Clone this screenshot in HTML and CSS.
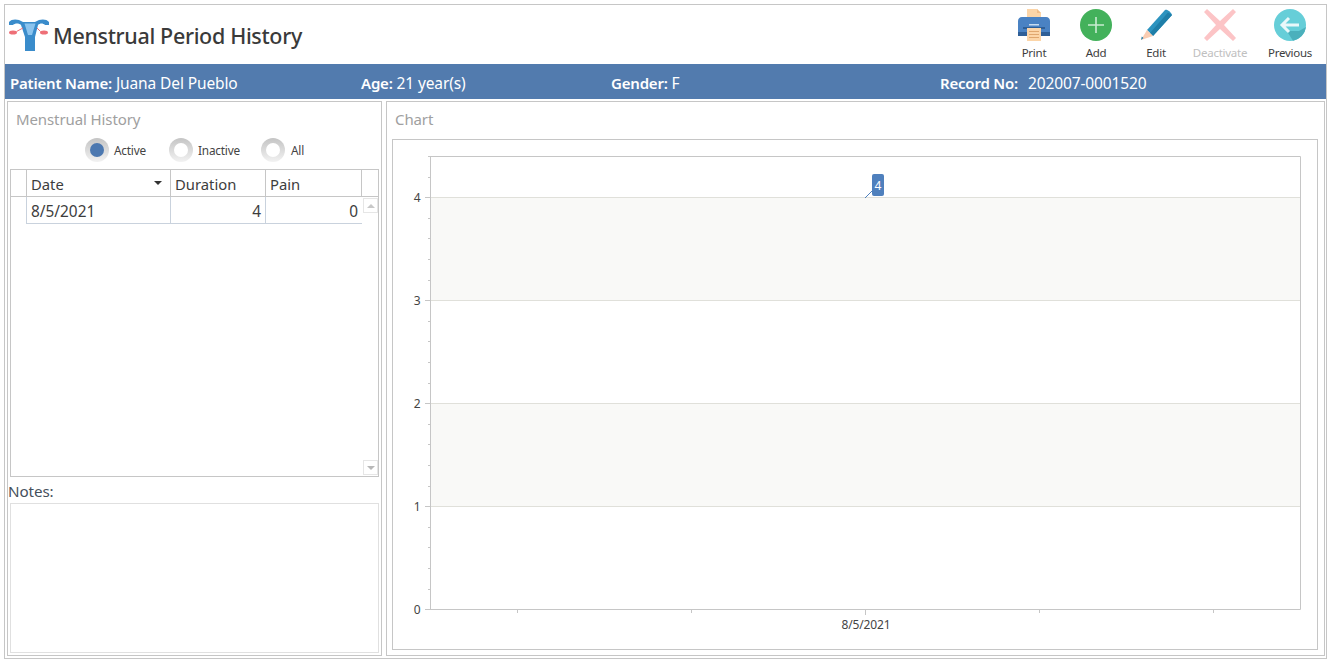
FILE: index.html
```html
<!DOCTYPE html>
<html lang="en">
<head>
<meta charset="utf-8">
<title>Menstrual Period History</title>
<link rel="stylesheet" href="styles.css">
</head>
<body>
<div class="app">
  <header class="top">
    <div class="brand">
      <svg class="logo" viewBox="0 0 42 34" width="42" height="34">
        <path d="M1 7 V4 C3 1 8 1 11 2 L15 4 H27 L31 2 C34 1 39 1 41 4 V7 H37 C35 5 32 5 30 7 L27 19 V33 H17 V19 L13 7 C11 5 7 5 5 7 Z" fill="#3a8ccb"/>
        <path d="M16.500 5.500 H27.500 L24 17 H20 Z" fill="#8cc4ee"/>
        <ellipse cx="5" cy="14.500" rx="4" ry="2" fill="#ee6f77"/>
        <ellipse cx="36" cy="14.500" rx="4" ry="2" fill="#ee6f77"/>
        <path d="M8.500 13.500 L15 10 M32.500 13.500 L29 10" stroke="#ee6f77" stroke-width="1" fill="none"/>
      </svg>
      <h1 class="title">Menstrual Period History</h1>
    </div>
    <nav class="tools">
      <div class="tool tool-print">
        <svg viewBox="0 0 34 32" width="34" height="32">
          <path d="M10 0 H20 L24 4 V12 H10 Z" fill="#fcd5a8"/>
          <path d="M20 0 L24 4 H20 Z" fill="#f2bd88"/>
          <path d="M5 8 H29 C31.500 8 33 10 33 12 V27 H1 V12 C1 10 2.500 8 5 8 Z" fill="#4a82c3"/>
          <rect x="1" y="23" width="32" height="4" fill="#2f5f97"/>
          <rect x="6" y="18" width="22" height="2" fill="#2f5f97"/>
          <rect x="12" y="15" width="10" height="1.500" fill="#c7dcf1"/>
          <rect x="10" y="19" width="14" height="13" fill="#fcd5a8"/>
          <path d="M12 22.500 H22 M12 25.500 H22 M12 28.500 H22" stroke="#e0a76f" stroke-width="1"/>
        </svg>
        <span class="tool-label">Print</span>
      </div>
      <div class="tool tool-add">
        <svg viewBox="0 0 32 32" width="32" height="32">
          <circle cx="16" cy="16" r="16" fill="#43b15b"/>
          <path d="M16 8 V24 M8 16 H24" stroke="#c9ecd1" stroke-width="1.600"/>
        </svg>
        <span class="tool-label">Add</span>
      </div>
      <div class="tool tool-edit">
        <svg viewBox="0 0 32 32" width="32" height="32">
          <path d="M7 21 L25 1 C27 0 31 3 32 6 L13 27 Z" fill="#2c93bf"/>
          <path d="M10 24 L28 3.500 L32 6 L13 27 Z" fill="#1f7ea8"/>
          <path d="M7 21 L13 27 L1 31 Z" fill="#f9cdb3"/>
          <path d="M3.500 29 L1 31 L1.800 27.500 Z" fill="#1f7ea8"/>
        </svg>
        <span class="tool-label">Edit</span>
      </div>
      <div class="tool tool-off">
        <svg viewBox="0 0 32 32" width="32" height="32">
          <path d="M3 0 L16 12 L29 0 L32 3 L20 16 L32 29 L29 32 L16 20 L3 32 L0 29 L12 16 L0 3 Z" fill="#fcc4c6"/>
        </svg>
        <span class="tool-label tool-label-off">Deactivate</span>
      </div>
      <div class="tool tool-prev">
        <svg viewBox="0 0 32 32" width="32" height="32">
          <circle cx="16" cy="16" r="16" fill="#66ced8"/>
          <path d="M9 16 L15 22 L25 22 L32 18 A16 16 0 0 1 19 31.700 Z" fill="#4bb0bc"/>
          <path d="M15 9 L8 16 L15 23 M8 16 H25" stroke="#e9f8fa" stroke-width="3" fill="none"/>
        </svg>
        <span class="tool-label">Previous</span>
      </div>
    </nav>
  </header>

  <div class="patient">
    <div><b>Patient Name:</b> Juana Del Pueblo</div>
    <div><b>Age:</b> 21 year(s)</div>
    <div><b>Gender:</b> F</div>
    <div class="record"><b>Record No:</b><span>202007-0001520</span></div>
  </div>

  <main class="panels">
    <section class="panel left">
      <h2 class="panel-title">Menstrual History</h2>
      <div class="radios">
        <label class="radio radio-active"><i class="ring"><i class="dot"></i></i>Active</label>
        <label class="radio radio-inactive"><i class="ring"><i class="dot"></i></i>Inactive</label>
        <label class="radio radio-all"><i class="ring"><i class="dot"></i></i>All</label>
      </div>
      <div class="grid">
        <div class="grid-head">
          <div class="cell cell-ind"></div>
          <div class="cell cell-date">Date<i class="sort"></i></div>
          <div class="cell cell-dur">Duration</div>
          <div class="cell cell-pain">Pain</div>
          <div class="cell cell-end"></div>
        </div>
        <div class="grid-body">
          <div class="grid-rows">
            <div class="grid-row">
              <div class="cell cell-ind blank"></div>
              <div class="cell cell-date">8/5/2021</div>
              <div class="cell cell-dur num">4</div>
              <div class="cell cell-pain num last">0</div>
            </div>
          </div>
          <div class="scroll">
            <div class="scroll-btn"><i class="arrow-up"></i></div>
            <div class="scroll-btn"><i class="arrow-down"></i></div>
          </div>
        </div>
      </div>
      <div class="notes-label">Notes:</div>
      <div class="notes"></div>
    </section>

    <section class="panel right">
      <h2 class="panel-title">Chart</h2>
      <div class="chart">
        <svg class="chart-svg" viewBox="0 0 924 509" width="924" height="509">
          <g transform="translate(-393 -140)">
            <rect x="430" y="197" width="870" height="103" fill="#f9f9f7"/>
            <rect x="430" y="403" width="870" height="103" fill="#f9f9f7"/>
            <path d="M430 156.500 H1300.500 V609.500 M430 609.500 H1300.500" class="axis"/>
            <path d="M430 197.500 H1300 M430 300.500 H1300 M430 403.500 H1300 M430 506.500 H1300" class="gridline"/>
            <path d="M430.500 156 V610" class="axis"/>
            <path d="M425 197.500 H430 M425 300.500 H430 M425 403.500 H430 M425 506.500 H430 M425 609.500 H430" class="axis"/>
            <path d="M428 156.500 H430 M428 177.500 H430 M428 218.500 H430 M428 238.500 H430 M428 259.500 H430 M428 280.500 H430 M428 321.500 H430 M428 341.500 H430 M428 362.500 H430 M428 383.500 H430 M428 424.500 H430 M428 444.500 H430 M428 465.500 H430 M428 486.500 H430 M428 527.500 H430 M428 547.500 H430 M428 568.500 H430 M428 589.500 H430" class="axis"/>
            <path d="M517.500 610 V613 M691.500 610 V613 M865.500 610 V615 M1039.500 610 V613 M1213.500 610 V613" class="axis"/>
            <g class="tick-text">
              <text x="417" y="202" text-anchor="middle">4</text>
              <text x="417" y="305" text-anchor="middle">3</text>
              <text x="417" y="408" text-anchor="middle">2</text>
              <text x="417" y="511" text-anchor="middle">1</text>
              <text x="417" y="614" text-anchor="middle">0</text>
              <text x="866" y="629" text-anchor="middle">8/5/2021</text>
            </g>
            <path d="M865 198 L873 190" class="leader"/>
            <rect x="872" y="174" width="12" height="22" rx="2" fill="#4f80bd"/>
            <text x="878" y="190" text-anchor="middle" class="point-label">4</text>
          </g>
        </svg>
      </div>
    </section>
  </main>
</div>
</body>
</html>
```

FILE: styles.css
```css
* { box-sizing: border-box; }
html, body { margin: 0; padding: 0; background: #fff; }
body {
  font-family: "Noto Sans", "Open Sans", "Liberation Sans", sans-serif;
  color: #3b3b3b;
  width: 1328px;
  height: 663px;
  overflow: hidden;
  padding: 4px 0 0 4px;
}
.app {
  width: 1323px;
  height: 655px;
  border: 1px solid #c6c6c6;
  display: flex;
  flex-direction: column;
}
.top {
  height: 59px;
  display: flex;
  justify-content: space-between;
}
.brand {
  display: flex;
  align-items: flex-start;
  padding: 13px 0 0 3px;
}
.logo { display: block; flex: none; }
.title {
  margin: 3px 0 0 3px;
  font-size: 21.5px;
  line-height: 30px;
  font-weight: 500;
  letter-spacing: -0.34px;
  color: #3a3a3a;
}
.tools { display: flex; padding-top: 4px; }
.tool {
  display: flex;
  flex-direction: column;
  align-items: center;
  height: 52px;
}
.tool svg { display: block; flex: none; }
.tool-print { width: 64px; }
.tool-add { width: 60px; }
.tool-edit { width: 60px; }
.tool-off { width: 68px; }
.tool-prev { width: 72px; }
.tool-label {
  margin-top: 4px;
  font-size: 11.5px;
  line-height: 16px;
  letter-spacing: -0.25px;
  color: #3d3d3d;
  white-space: nowrap;
}
.tool-label-off { color: #c0c0c0; }

.patient {
  height: 35px;
  background: #527bae;
  color: #fff;
  display: grid;
  grid-template-columns: 351px 250px 329px 1fr;
  align-items: center;
  padding: 2px 0 0 5px;
  font-size: 15.5px;
  line-height: 20px;
  letter-spacing: -0.12px;
}
.patient b { font-weight: 600; font-size: 15px; letter-spacing: -0.2px; }
.record { display: flex; gap: 10px; }

.panels {
  flex: 1;
  min-height: 0;
  display: flex;
  gap: 4px;
  padding: 2px 1px 2px 2px;
}
.panel {
  border: 1px solid #c6c6c6;
  display: flex;
  flex-direction: column;
}
.left { width: 375px; padding: 0 0 2px 0; }
.right { flex: 1; padding: 0 6px 5px 5px; }
.panel-title {
  margin: 0;
  padding: 7px 0 0 8px;
  height: 36px;
  font-size: 15px;
  line-height: 20px;
  font-weight: 400;
  color: #a0a0a0;
  letter-spacing: -0.1px;
}
.right .panel-title { padding-left: 3px; height: 37px; }
.radios { height: 31px; display: flex; padding-left: 77px; }
.radio {
  display: flex;
  align-items: center;
  height: 26px;
  font-size: 11.8px;
  letter-spacing: -0.2px;
  color: #444;
  margin-top: -1px;
}
.radio-active { width: 84px; }
.radio-inactive { width: 92px; }
.ring {
  width: 24px;
  height: 24px;
  border-radius: 50%;
  background: linear-gradient(#c4c4c4, #f2f2f2);
  display: flex;
  align-items: center;
  justify-content: center;
  margin-right: 5px;
  flex: none;
}
.radio-all .ring { margin-right: 6px; }
.dot {
  width: 14px;
  height: 14px;
  border-radius: 50%;
  background: #fff;
}
.radio-active .dot { background: #4c78b0; }

.grid {
  margin-left: 2px;
  width: 369px;
  height: 308px;
  border: 1px solid #c6c6c6;
  display: flex;
  flex-direction: column;
  font-size: 14.8px;
  color: #3d3d3d;
}
.grid-head {
  display: flex;
  height: 27px;
  border-bottom: 1px solid #c6c6c6;
}
.cell {
  height: 100%;
  padding: 0 4px;
  line-height: 29px;
  border-right: 1px solid #c6c6c6;
  position: relative;
  white-space: nowrap;
}
.cell-ind { width: 16px; padding: 0; }
.cell-date { width: 144px; }
.cell-dur { width: 95px; }
.cell-pain { width: 96px; }
.cell-end { flex: 1; border-right: 0; }
.sort {
  position: absolute;
  right: 8px;
  top: 11px;
  border: 4px solid transparent;
  border-top-color: #333;
  border-bottom: 0;
}
.grid-body { flex: 1; display: flex; min-height: 0; }
.grid-rows { width: 351px; }
.grid-row {
  display: flex;
  height: 27px;
  border-bottom: 1px solid #c9d2dd;
  font-size: 15.4px;
}
.grid-row .cell { border-right-color: #c9d2dd; }
.grid-row .last { border-right: 0; }
.blank { height: 27px; background: #fff; margin-bottom: -1px; }
.num { text-align: right; }
.scroll {
  flex: 1;
  padding: 1px 2px 1px 1px;
  display: flex;
  flex-direction: column;
  justify-content: space-between;
}
.scroll-btn {
  width: 15px;
  height: 15px;
  border: 1px solid #e6e6e6;
  display: flex;
  align-items: center;
  justify-content: center;
}
.arrow-up { border: 4px solid transparent; border-bottom-color: #c8c8c8; border-top: 0; }
.arrow-down { border: 4px solid transparent; border-top-color: #b8b8b8; border-bottom: 0; }
.notes-label {
  height: 26px;
  padding-top: 4px;
  font-size: 15.2px;
  line-height: 20px;
  letter-spacing: -0.1px;
  color: #46505c;
}
.notes {
  margin-left: 2px;
  width: 369px;
  flex: 1;
  border: 1px solid #e0e0e0;
}
.chart {
  flex: 1;
  min-height: 0;
  border: 1px solid #c6c6c6;
}
.chart-svg { display: block; }
.axis { stroke: #c6c6c6; stroke-width: 1; fill: none; }
.gridline { stroke: #e0e0da; stroke-width: 1; fill: none; }
.leader { stroke: #4f80bd; stroke-width: 1; fill: none; }
.tick-text text {
  font-family: "Noto Sans", "Open Sans", sans-serif;
  font-size: 12px;
  fill: #444;
  letter-spacing: -0.15px;
}
.point-label {
  font-family: "Noto Sans", "Open Sans", sans-serif;
  font-size: 12px;
  fill: #fff;
}
```
